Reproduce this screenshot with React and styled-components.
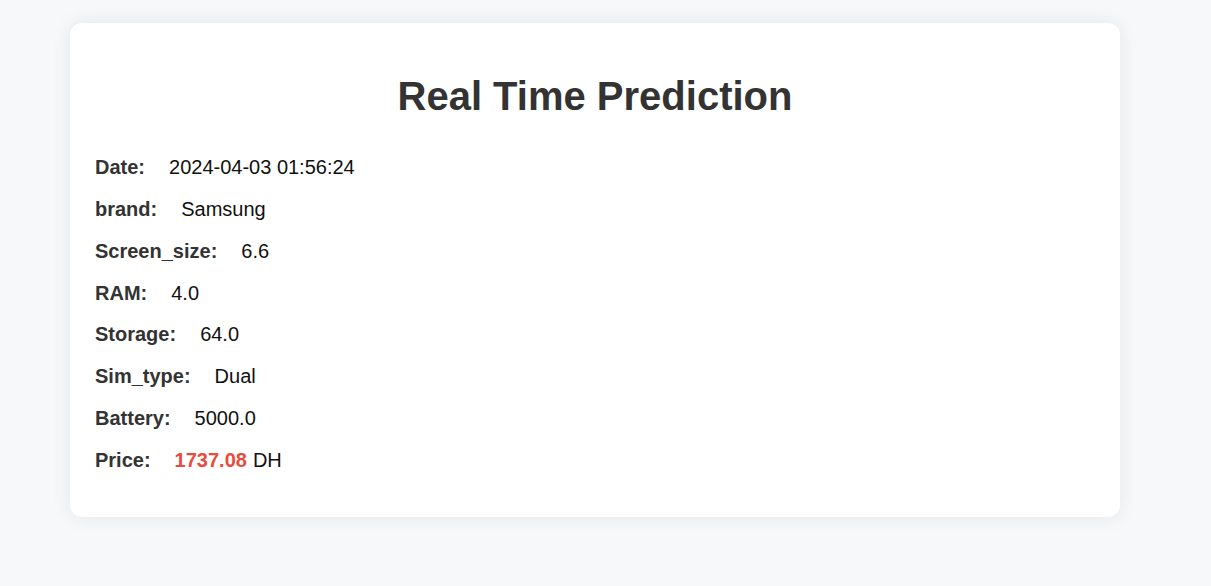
import React from "react";
import styled, { createGlobalStyle } from "styled-components";

const Global = createGlobalStyle`
  html, body {
    margin: 0;
    padding: 0;
    background: #f7f8fa;
    font-family: "Liberation Sans", Arial, sans-serif;
  }
`;

const Page = styled.div`
  padding: 23px 0 40px 70px;
`;

const Card = styled.div`
  width: 1050px;
  box-sizing: border-box;
  background: #ffffff;
  border-radius: 12px;
  box-shadow: 0 0 20px rgba(0, 0, 0, 0.08);
  padding: 50px 25px 45px 25px;
`;

const Title = styled.h1`
  margin: 0 0 37px 0;
  font-size: 40px;
  line-height: 46px;
  font-weight: 700;
  color: #333333;
  text-align: center;
`;

const List = styled.div`
  display: flex;
  flex-direction: column;
  gap: 18.86px;
`;

const Row = styled.div`
  display: flex;
  align-items: baseline;
  font-size: 20px;
  line-height: 23px;
  color: #111111;
`;

const Label = styled.span`
  font-weight: 700;
  color: #333333;
  margin-right: 24px;
`;

const Value = styled.span`
  color: #111111;
`;

const Price = styled.span`
  font-weight: 700;
  color: #e74c3c;
  margin-right: 6px;
`;

const rows = [
  ["Date:", "2024-04-03 01:56:24"],
  ["brand:", "Samsung"],
  ["Screen_size:", "6.6"],
  ["RAM:", "4.0"],
  ["Storage:", "64.0"],
  ["Sim_type:", "Dual"],
  ["Battery:", "5000.0"],
];

export default function App() {
  return (
    <>
      <Global />
      <Page>
        <Card>
          <Title>Real Time Prediction</Title>
          <List>
            {rows.map(([l, v]) => (
              <Row key={l}>
                <Label>{l}</Label>
                <Value>{v}</Value>
              </Row>
            ))}
            <Row>
              <Label>Price:</Label>
              <Price>1737.08</Price>
              <Value>DH</Value>
            </Row>
          </List>
        </Card>
      </Page>
    </>
  );
}
